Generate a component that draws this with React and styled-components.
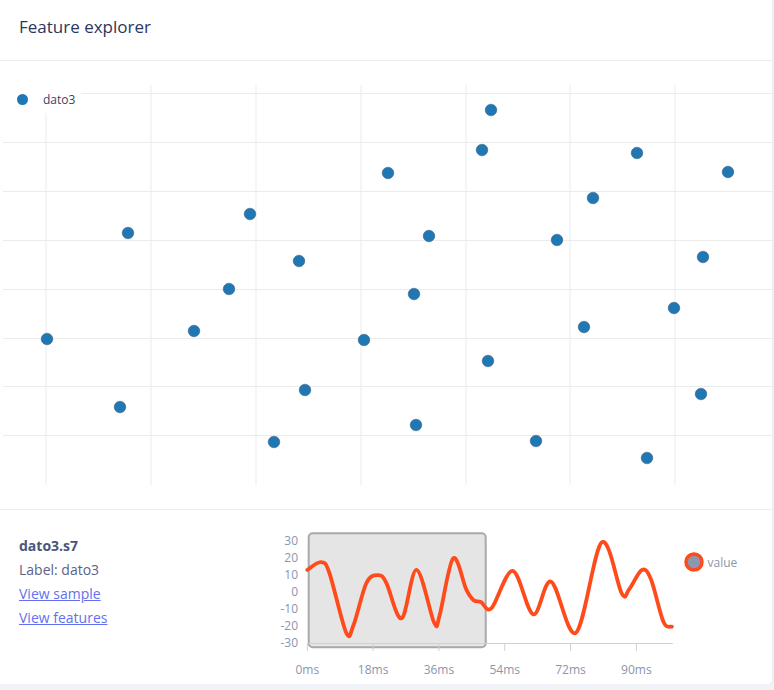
import styled, { createGlobalStyle } from 'styled-components';

const GlobalStyle = createGlobalStyle`
    html, body {
        margin:0;
        padding:0;
        background:#f1f2f7;
        font-family:'Open Sans', 'Noto Sans', sans-serif;
    }
`;

const Card = styled.div`
    width:772px;
    height:684px;
    background:white;
    border-radius:0 0 4px 0;
    box-shadow:0 1px 2px rgba(40,50,90,0.08);
    display:flex;
    flex-direction:column;
    overflow:hidden;
`;

const Header = styled.div`
    height:61px;
    display:flex;
    align-items:center;
    padding:0 19px 7px;
    border-bottom:1px solid #ececec;
    box-sizing:border-box;
    flex-shrink:0;
`;

const Title = styled.h2`
    margin:0;
    font-size:17px;
    font-weight:500;
    color:#2c365c;
`;

const PlotArea = styled.div`
    position:relative;
    height:448px;
    border-bottom:1px solid #ececec;
    flex-shrink:0;
`;

const Legend = styled.div`
    position:absolute;
    left:0;
    top:24px;
    width:81px;
    height:28px;
    background:white;
    display:flex;
    align-items:center;
    padding-left:17px;
    box-sizing:border-box;
    gap:15px;
    font-size:12px;
    color:#3a4266;
`;

const LegendDot = styled.span`
    width:11px;
    height:11px;
    border-radius:50%;
    background:${p => p.color};
`;

const Detail = styled.div`
    display:flex;
    flex:1;
`;

const Info = styled.div`
    width:270px;
    padding:24px 0 0 19px;
    box-sizing:border-box;
    display:flex;
    flex-direction:column;
    font-size:14px;
    line-height:24px;
    color:#5b6383;
`;

const SampleName = styled.div`
    font-weight:700;
    color:#4b5578;
`;

const Link = styled.a`
    color:#6370ef;
    text-decoration:underline;
    cursor:pointer;
    width:fit-content;
`;

const gridX = [46, 151, 256, 361, 466, 570, 675];
const gridY = [32, 81, 130, 179, 228, 277, 325, 374];

const points = [
    [491, 110], [482, 150], [637, 153], [388, 173], [728, 172], [593, 198],
    [250, 214], [128, 233], [429, 236], [557, 240], [299, 261], [703, 257],
    [229, 289], [414, 294], [674, 308], [194, 331], [584, 327], [47, 339],
    [364, 340], [488, 361], [305, 390], [120, 407], [701, 394], [416, 425],
    [274, 442], [536, 441], [647, 458],
];

const Scatter = () => (
    <svg width="772" height="448">
        {gridX.map(x => (
            <line key={x} x1={x} x2={x} y1={24} y2={424} stroke="#ebebeb" strokeWidth="1" />
        ))}
        {gridY.map(y => (
            <line key={y} x1={3} x2={772} y1={y + 0.5} y2={y + 0.5} stroke="#ebebeb" strokeWidth="1" />
        ))}
        {points.map(([x, y], i) => (
            <circle key={i} cx={x} cy={y - 61} r="5.8" fill="#1f77b4" stroke="#3d6386" strokeWidth="0.6" />
        ))}
    </svg>
);

// signal samples (ms, value)
const signal = [
    [0, 12.5], [3.7, 17], [6, 11], [10.6, -24], [12.6, -20], [16.2, 5], [19.4, 9.5],
    [21.6, 5], [25.8, -15.8], [29.9, 12.5], [34.7, -18.4], [36.2, -14], [39.9, 19.3],
    [43.5, 1], [45.5, -5.2], [47.5, -6.3], [50.4, -9.8], [56.2, 11.9], [61.8, -13.5],
    [66.7, 5.6], [73.5, -24.2], [80.5, 28.6], [86, -1.2], [88, 1], [91.5, 12.5],
    [94, 7], [97.4, -17.8], [99.7, -20.7],
];

const sx = ms => 37.3 + 3.656 * ms;
const sy = v => 81.3 - 1.71 * v;

const smoothPath = pts => {
    const p = pts.map(([m, v]) => [sx(m), sy(v)]);
    let d = `M${p[0][0]},${p[0][1]}`;
    for (let i = 0; i < p.length - 1; i++) {
        const p0 = p[i - 1] || p[i];
        const p1 = p[i];
        const p2 = p[i + 1];
        const p3 = p[i + 2] || p2;
        const c1 = [p1[0] + (p2[0] - p0[0]) / 6, p1[1] + (p2[1] - p0[1]) / 6];
        const c2 = [p2[0] - (p3[0] - p1[0]) / 6, p2[1] - (p3[1] - p1[1]) / 6];
        d += ` C${c1[0]},${c1[1]} ${c2[0]},${c2[1]} ${p2[0]},${p2[1]}`;
    }
    return d;
};

const axisText = { fontSize: 12, fill: '#8a96ad', fontFamily: "'Open Sans', sans-serif" };

const SignalChart = () => (
    <svg width="502" height="173">
        <rect x="38.7" y="23.3" width="177" height="114" rx="4" fill="#e5e5e5" stroke="#a9a9a9" strokeWidth="2" />
        {[30, 20, 10, 0, -10, -20, -30].map(v => (
            <text key={v} x="28" y={sy(v)} textAnchor="end" dominantBaseline="central" style={axisText}>{v}</text>
        ))}
        <line x1={sx(0)} x2={sx(100)} y1="133.5" y2="133.5" stroke="#c9d1dd" strokeWidth="1" />
        {[0, 18, 36, 54, 72, 90].map(m => (
            <g key={m}>
                <line x1={sx(m)} x2={sx(m)} y1="133.5" y2="141" stroke="#c9d1dd" strokeWidth="1" />
                <text x={sx(m)} y="159" textAnchor="middle" dominantBaseline="central" style={axisText}>{m}ms</text>
            </g>
        ))}
        <path d={smoothPath(signal)} fill="none" stroke="#ff4a1c" strokeWidth="3.8" strokeLinejoin="round" strokeLinecap="round" />
        <circle cx="424" cy="52" r="8" fill="#8c98b0" stroke="#ff4a1c" strokeWidth="3.5" />
        <text x="437.5" y="52" dominantBaseline="central" style={axisText}>value</text>
    </svg>
);

const App = () => {
    return (
        <>
            <GlobalStyle />
            <Card>
                <Header>
                    <Title>Feature explorer</Title>
                </Header>
                <PlotArea>
                    <Scatter />
                    <Legend>
                        <LegendDot color="#1f77b4" />
                        dato3
                    </Legend>
                </PlotArea>
                <Detail>
                    <Info>
                        <SampleName>dato3.s7</SampleName>
                        <div>Label: dato3</div>
                        <Link>View sample</Link>
                        <Link>View features</Link>
                    </Info>
                    <SignalChart />
                </Detail>
            </Card>
        </>
    );
};

export default App;
